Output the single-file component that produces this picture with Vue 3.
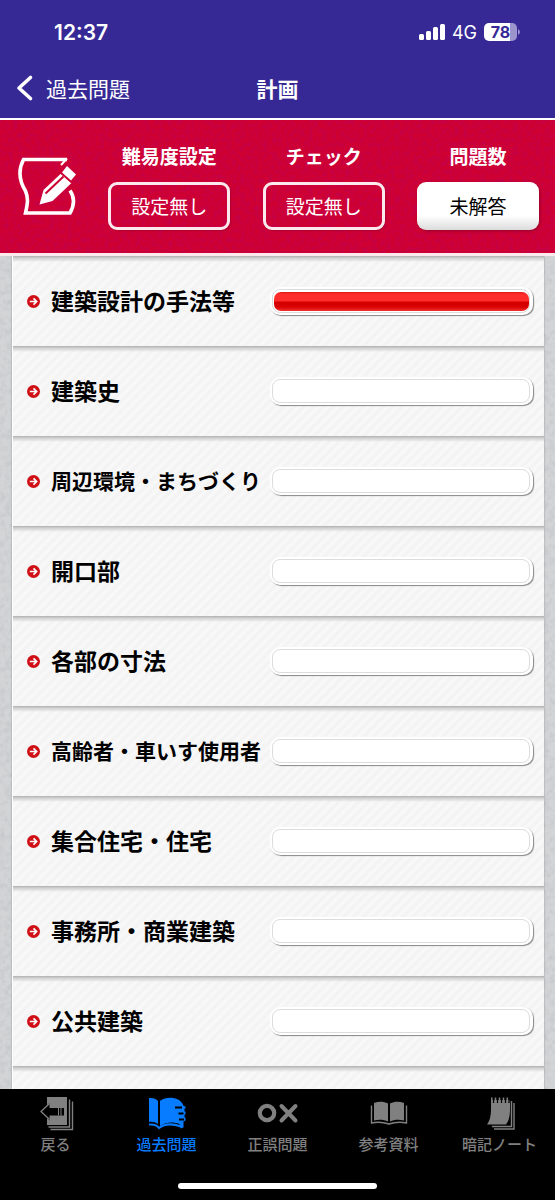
<script setup>
const back = '過去問題'
const title = '計画'
const filters = [
  { label: '難易度設定', value: '設定無し', solid: false },
  { label: 'チェック', value: '設定無し', solid: false },
  { label: '問題数', value: '未解答', solid: true },
]
const topics = [
  { name: '建築設計の手法等', done: 100 },
  { name: '建築史', done: 0 },
  { name: '周辺環境・まちづくり', done: 0, long: true },
  { name: '開口部', done: 0 },
  { name: '各部の寸法', done: 0 },
  { name: '高齢者・車いす使用者', done: 0, long: true },
  { name: '集合住宅・住宅', done: 0 },
  { name: '事務所・商業建築', done: 0 },
  { name: '公共建築', done: 0 },
]
const tabs = [
  { id: 'back', label: '戻る' },
  { id: 'past', label: '過去問題' },
  { id: 'ox', label: '正誤問題' },
  { id: 'book', label: '参考資料' },
  { id: 'note', label: '暗記ノート' },
]
</script>

<template>
  <div class="screen">
    <header class="top">
      <div class="status">
        <span class="clock">12:37</span>
        <span class="signals">
          <svg width="27" height="18" viewBox="0 0 27 18" fill="#fff" aria-hidden="true">
            <rect x="0" y="11" width="5" height="6" rx="1.5" />
            <rect x="7" y="8" width="5" height="9" rx="1.5" />
            <rect x="14" y="4" width="5" height="13" rx="1.5" />
            <rect x="21" y="1" width="5" height="16" rx="1.5" />
          </svg>
          <span class="net">4G</span>
          <span class="battery">
            <span class="cell">78</span>
            <svg width="3" height="8" viewBox="0 0 3 8" aria-hidden="true"><path d="M1 1Q5 4 1 7Z" fill="#9c95cd" /></svg>
          </span>
        </span>
      </div>
      <nav class="nav">
        <a class="back" href="#back">
          <svg width="18" height="28" viewBox="0 0 18 28" fill="none" stroke="#fff" stroke-width="3.6" stroke-linecap="round" stroke-linejoin="round" aria-hidden="true">
            <path d="M14.5 3.500L3 14l11.500 10.500" />
          </svg>
          <span>{{ back }}</span>
        </a>
        <h1>{{ title }}</h1>
      </nav>
    </header>

    <section class="filters">
      <svg class="texture" aria-hidden="true">
        <filter id="cloth" x="0" y="0" width="100%" height="100%">
          <feTurbulence type="fractalNoise" baseFrequency="0.22" numOctaves="3" seed="4" />
          <feColorMatrix values="0 0 0 0 0.5  0 0 0 0 0  0 0 0 0 0.1  1.3 0 0 0 -0.5" />
        </filter>
        <rect width="100%" height="100%" filter="url(#cloth)" />
      </svg>
      <svg class="memo" width="60" height="62" viewBox="0 0 60 62" aria-hidden="true">
        <path d="M51 4.500H7.500C1 17 4 27 9.500 36C13 44 11 51 9.500 58H54C58.500 50 58.500 42 54 35.500" fill="none" stroke="#fff" stroke-width="3.600" />
        <path d="M51 3.500L45 10" stroke="#fff" stroke-width="2" />
        <path d="M27.500 35L45 18.500L55.500 28L36.500 46L23.500 49.500Z" fill="#fff" />
        <path d="M29.500 38.500L47.500 21.500" stroke="#cb0030" stroke-width="2" />
        <path d="M51 11L60 19.500L55 25.500L46 17.500Z" fill="#fff" />
        <path d="M43.500 17L56 28" stroke="#cb0030" stroke-width="1.500" />
      </svg>
      <div v-for="(f, i) in filters" :key="i" class="filter">
        <span :id="'filter-' + i" class="caption">{{ f.label }}</span>
        <button type="button" :class="{ solid: f.solid }" :aria-describedby="'filter-' + i">{{ f.value }}</button>
      </div>
    </section>

    <main class="wall">
      <svg class="texture" aria-hidden="true">
        <filter id="plaster" x="0" y="0" width="100%" height="100%">
          <feTurbulence type="fractalNoise" baseFrequency="0.18" numOctaves="4" seed="9" />
          <feColorMatrix values="0 0 0 0 0.5  0 0 0 0 0.5  0 0 0 0 0.52  1.1 0 0 0 -0.44" />
        </filter>
        <rect width="100%" height="100%" filter="url(#plaster)" />
      </svg>
      <ul class="topics">
        <li v-for="(t, i) in topics" :key="t.name">
          <a class="row" :href="'#topic-' + i">
            <svg class="bullet" width="13" height="13" viewBox="0 0 14 14" aria-hidden="true">
              <circle cx="7" cy="7" r="7" fill="#cf1016" />
              <path d="M3 7H10M7 3.600L10.400 7 7 10.400" fill="none" stroke="#fff" stroke-width="1.800" />
            </svg>
            <span class="name" :class="{ long: t.long }">{{ t.name }}</span>
            <span class="gauge" role="progressbar" :aria-label="t.name" :aria-valuenow="t.done">
              <span class="track"><span v-if="t.done" class="fill" :style="{ width: t.done + '%' }"></span></span>
            </span>
          </a>
        </li>
        <li class="rest"></li>
      </ul>
    </main>

    <footer class="bottom">
      <nav class="tabs">
        <a v-for="t in tabs" :key="t.id" :href="'#' + t.id" :class="{ active: t.id === 'past' }">
          <svg v-if="t.id === 'back'" width="36" height="36" viewBox="0 0 36 36" aria-hidden="true">
            <path d="M9 1h20v28H9z" fill="currentColor" />
            <path d="M31.500 3.500v27.500H10.500M34.500 5.500v28H12.500" fill="none" stroke="currentColor" stroke-width="1.400" />
            <path d="M2.500 15.500L11.500 7v5H26v7.500H11.500v5z" fill="#000" />
            <path d="M11.500 7.500L3 15.500L11.500 23.500" fill="none" stroke="currentColor" stroke-width="1.300" />
            <path d="M20.500 12v7.500M23 12v7.500" stroke="currentColor" stroke-width="1" />
          </svg>
          <svg v-else-if="t.id === 'past'" width="38" height="36" viewBox="0 0 38 36" aria-hidden="true">
            <path d="M1 2c4-.5 7 .5 9 3v23c-3-2-6-2.500-9-2zM12 5c5-4 13-4 18-1.500 3 1.500 5 4 5.500 6.500l2 .5v14l-2 1v6l-3 1-1-4.500c-7-2.500-13-2-19.500 2z" fill="currentColor" />
            <path d="M1 28.500c5-.5 8 .5 10 3.500 5-4 12-5 22-1.500" fill="none" stroke="currentColor" stroke-width="2" />
            <path d="M27 11.500h7M30.500 17.500h5M31 23.500h5" stroke="#000" stroke-width="2" />
            <path d="M37.500 12.500v3M37.500 18.500v3" stroke="#000" stroke-width="2" />
          </svg>
          <svg v-else-if="t.id === 'ox'" width="42" height="36" viewBox="0 0 42 36" fill="none" stroke="currentColor" aria-hidden="true">
            <circle cx="10" cy="17" r="7.200" stroke-width="4.200" />
            <path d="M24.500 10L38.500 24.500M38.500 10L24.500 24.500" stroke-width="4" stroke-linecap="round" />
          </svg>
          <svg v-else-if="t.id === 'book'" width="40" height="36" viewBox="0 0 40 36" aria-hidden="true">
            <path d="M5 7c5-2 10-1.500 14 .5v18c-4-2-9-2.500-14-1zM21 7.500c4-2 9-2.500 14-.5v17.500c-5-1.500-10-1-14 1z" fill="currentColor" />
            <path d="M2.500 9.500v17.500c7-1.500 13-.5 17.500 1 4.500-1.500 10.500-2.500 17.500-1V9.500" fill="none" stroke="currentColor" stroke-width="1.400" />
          </svg>
          <svg v-else width="40" height="36" viewBox="0 0 40 36" aria-hidden="true">
            <path d="M11 4h19v9c0 7-1 11.500-4 15.500H7c3-4 4-9 4-16z" fill="currentColor" />
            <path d="M31.500 5v25.500H12M34 7v26H14" fill="none" stroke="currentColor" stroke-width="1.400" />
            <path d="M13.500 2v5M17.500 2v5M21.500 2v5M25.500 2v5M29 2v5" stroke="#000" stroke-width="1.300" />
            <path d="M11.800 1.500v5M15.500 1.500v5M19.500 1.500v5M23.500 1.500v5M27.300 1.500v5" stroke="currentColor" stroke-width="1.500" />
          </svg>
          <span>{{ t.label }}</span>
        </a>
      </nav>
      <div class="home"></div>
    </footer>
  </div>
</template>

<style>
body {
  margin: 0;
  background: #000;
}
</style>

<style scoped>
.screen {
  display: flex;
  flex-direction: column;
  height: 100vh;
  overflow: hidden;
  font-family: "Liberation Sans", "Noto Sans CJK JP", sans-serif;
}
.screen * {
  box-sizing: border-box;
}
.screen a {
  color: inherit;
  text-decoration: none;
}
.top {
  background: #362996;
  color: #fff;
  border-bottom: 2px solid #fff;
}
.status {
  display: flex;
  align-items: center;
  justify-content: space-between;
  height: 60px;
  padding: 4px 35px 0 54px;
  font-family: Inter, sans-serif;
}
.clock {
  font-size: 21px;
  font-weight: 600;
}
.signals {
  display: flex;
  align-items: center;
}
.net {
  margin-left: 6px;
  font-size: 18px;
}
.battery {
  display: flex;
  align-items: center;
  margin-left: 7px;
}
.cell {
  width: 33px;
  height: 18px;
  border-radius: 5px;
  background: linear-gradient(to right, #fff 78%, #9c95cd 78%);
  color: #362996;
  font-size: 16px;
  font-weight: 700;
  line-height: 18px;
  text-align: center;
}
.nav {
  display: grid;
  grid-template-columns: 1fr auto 1fr;
  align-items: center;
  height: 58px;
  padding: 0 16px 2px;
}
.back {
  display: flex;
  align-items: center;
  gap: 12px;
  font-size: 21px;
}
.nav h1 {
  margin: 0;
  font-size: 21px;
  font-weight: 700;
}
.texture {
  position: absolute;
  inset: 0;
  width: 100%;
  height: 100%;
}
.filters {
  position: relative;
  display: flex;
  align-items: flex-start;
  justify-content: space-between;
  height: 136px;
  padding: 22px 16px 0;
  background: #cf0032;
  border-bottom: 3px solid #fbe9ee;
}
.memo {
  position: relative;
  margin-top: 13px;
}
.filter {
  position: relative;
  display: flex;
  flex-direction: column;
  align-items: center;
  gap: 8px;
  width: 122px;
}
.caption {
  color: #fff;
  font-size: 19px;
  font-weight: 700;
  line-height: 32px;
}
.filter button {
  width: 100%;
  height: 48px;
  padding: 0 0 2px;
  border: 3px solid #fbe9ee;
  border-radius: 9px;
  background: transparent;
  box-shadow: 1px 1px 2px #80002060;
  color: #fff;
  font: inherit;
  font-size: 19px;
}
.filter button.solid {
  border: 0;
  background: linear-gradient(#fff 70%, #dcdcdc);
  box-shadow: 1px 1px 3px #60001880;
  color: #000;
}
.wall {
  position: relative;
  flex: 1;
  min-height: 0;
  padding: 0 11px 0 12px;
  background: #d2d4d6;
  overflow: hidden;
}
.topics {
  position: relative;
  margin: 0;
  padding: 0;
  list-style: none;
  background: #f5f5f5;
  border-left: 1px solid #fff;
  box-shadow: 0 0 2px #999;
}
.topics li {
  height: 90px;
  background:
    linear-gradient(#b0b0b0, #d0d0d0 2px, #f5f5f500 6px),
    repeating-linear-gradient(135deg, #f9f9f9 0, #f3f3f3 3px, #f3f3f3 4px, #f9f9f9 7px);
}
.row {
  display: flex;
  align-items: center;
  height: 100%;
  padding: 0 11px 0 14px;
}
.bullet {
  flex: none;
  margin-right: 11px;
}
.name {
  flex: 1;
  padding-bottom: 2px;
  color: #000;
  font-size: 23px;
  font-weight: 700;
  white-space: nowrap;
}
.name.long {
  font-size: 21px;
}
.gauge {
  display: block;
  flex: none;
  width: 52%;
  height: 28px;
  padding: 2px 3px 2px 2px;
  border-radius: 10px;
  background: #fff;
  box-shadow: 1px 1px 1px #888;
}
.track {
  display: block;
  height: 100%;
  padding: 2px 0 1px 1px;
  border: 1px solid #dcdcdc;
  border-radius: 8px;
}
.fill {
  display: block;
  height: 100%;
  border-radius: 7px;
  background: linear-gradient(#e01818, #ff2c2c 12%, #ff2c2c 46%, #d40000 54%, #d80000 78%, #f03030);
}
.bottom {
  height: 111px;
  background: #000;
}
.tabs {
  display: flex;
  height: 92px;
  padding-top: 7px;
}
.tabs a {
  display: flex;
  flex: 1;
  flex-direction: column;
  align-items: center;
  color: #808080;
  font-size: 15px;
  font-weight: 500;
  line-height: 25px;
}
.tabs a.active {
  color: #087cff;
}
.home {
  width: 36%;
  height: 6px;
  margin: 2px auto 0;
  border-radius: 3px;
  background: #fff;
}
</style>
